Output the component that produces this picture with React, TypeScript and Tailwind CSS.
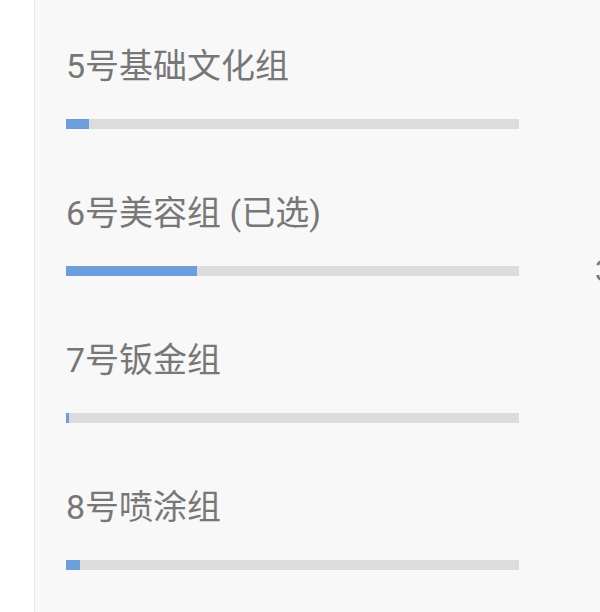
import React from "react";

const rows = [
  { name: "5号基础文化组", fill: 23 },
  { name: "6号美容组 (已选)", fill: 131, extra: "3" },
  { name: "7号钣金组", fill: 3 },
  { name: "8号喷涂组", fill: 14 },
];

export default function App() {
  return (
    <div
      className="w-[600px] h-[612px] overflow-hidden flex bg-white"
      style={{ fontFamily: 'Roboto, "Noto Sans CJK SC", sans-serif' }}
    >
      <div className="w-[35px] shrink-0 bg-white border-r border-[#e6e6e6]" />
      <div className="flex-1 bg-[#f8f8f8] pl-[31px] pt-[46px] flex flex-col">
        {rows.map((r) => (
          <div key={r.name} className="h-[147px] shrink-0 flex flex-col">
            <div className="h-[40px] text-[34px] leading-[40px] text-[#777777] whitespace-nowrap">
              {r.name}
            </div>
            <div className="mt-[33px] h-[10px] flex items-center">
              <div className="w-[453px] h-[10px] bg-[#dcdcdc] shrink-0">
                <div className="h-full bg-[#6c9edb]" style={{ width: r.fill }} />
              </div>
              {r.extra && (
                <span className="ml-[76px] text-[30px] leading-none text-[#777777]">
                  {r.extra}
                </span>
              )}
            </div>
          </div>
        ))}
      </div>
    </div>
  );
}
